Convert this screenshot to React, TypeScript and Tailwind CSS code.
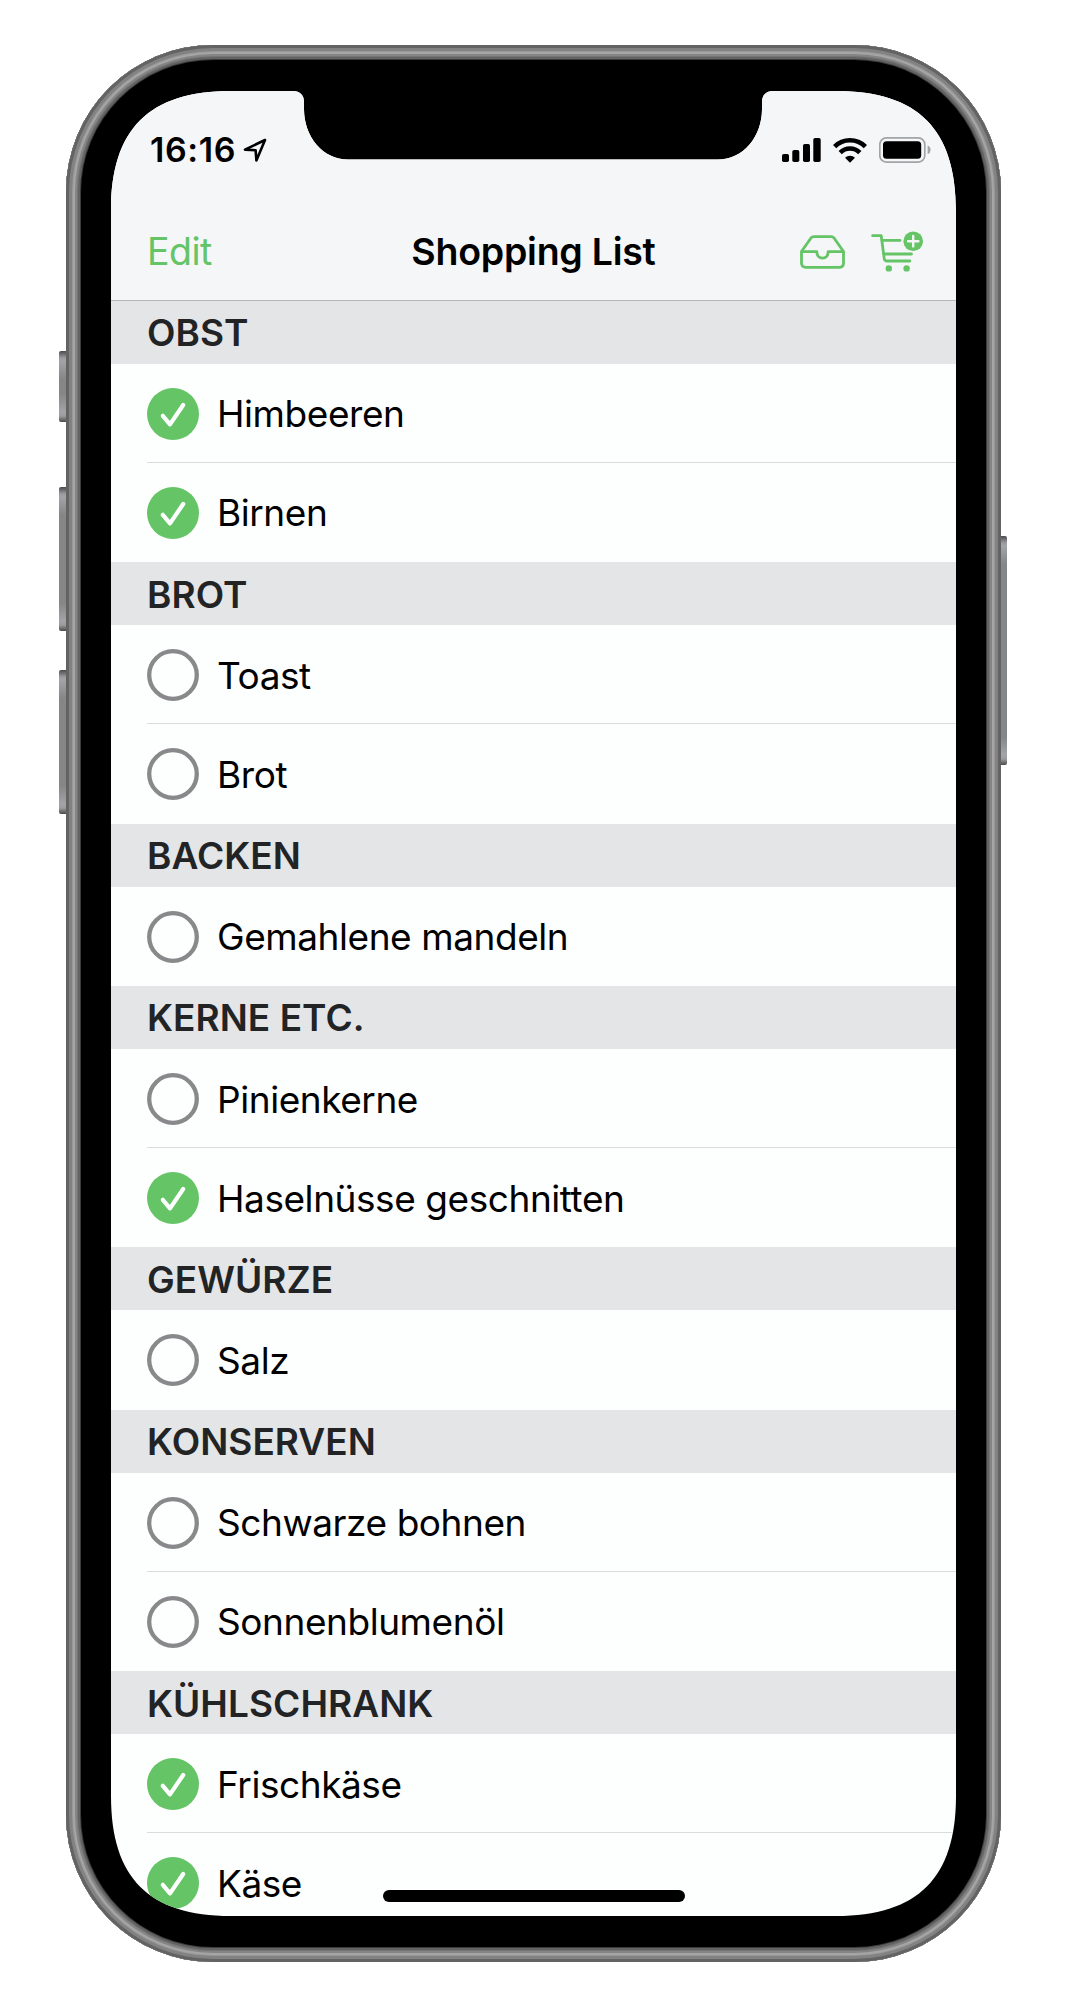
type Item = { name: string; done?: boolean };
type Section = { title: string; items: Item[] };

const sections: Section[] = [
  { title: "OBST", items: [{ name: "Himbeeren", done: true }, { name: "Birnen", done: true }] },
  { title: "BROT", items: [{ name: "Toast" }, { name: "Brot" }] },
  { title: "BACKEN", items: [{ name: "Gemahlene mandeln" }] },
  { title: "KERNE ETC.", items: [{ name: "Pinienkerne" }, { name: "Haselnüsse geschnitten", done: true }] },
  { title: "GEWÜRZE", items: [{ name: "Salz" }] },
  { title: "KONSERVEN", items: [{ name: "Schwarze bohnen" }, { name: "Sonnenblumenöl" }] },
  { title: "KÜHLSCHRANK", items: [{ name: "Frischkäse", done: true }, { name: "Käse", done: true }] },
];

function Check({ done }: { done?: boolean }) {
  return (
    <svg viewBox="0 0 52 52" className="size-[52px] shrink-0">
      {done ? (
        <>
          <circle cx="26" cy="26" r="26" fill="#64c466" />
          <path d="M15.8 27.8 L23 36.4 L36.2 17" fill="none" stroke="#fff" strokeWidth="4.2" strokeLinecap="round" strokeLinejoin="round" />
        </>
      ) : (
        <circle cx="26" cy="26" r="23.8" fill="none" stroke="#89898c" strokeWidth="4.3" />
      )}
    </svg>
  );
}

function StatusBar() {
  return (
    <div className="flex h-[118px] items-center pl-[39px] pr-[25px]">
      <span className="text-[34px] font-semibold leading-none tracking-[0.6px] text-black">16:16</span>
      <svg viewBox="0 0 24 24" className="ml-[7px] size-[24px]" fill="none" stroke="#000" strokeWidth="2.6" strokeLinejoin="round">
        <path d="M22 2 L2 11.6 L12.6 12.2 L13.4 22.4 Z" />
      </svg>
      <div className="ml-auto flex items-center">
        <svg viewBox="0 0 39 24" className="h-[24px] w-[39px]">
          <rect x="0" y="16" width="7" height="8" rx="1.8" />
          <rect x="10.3" y="12" width="7" height="12" rx="1.8" />
          <rect x="21" y="6" width="7" height="18" rx="1.8" />
          <rect x="31.3" y="0" width="7.4" height="24" rx="1.8" />
        </svg>
        <svg viewBox="0 0 34 25" className="ml-[12px] h-[25px] w-[34px]" fill="none" stroke="#000" strokeWidth="4.6">
          <path d="M1.6 8.6 A22 22 0 0 1 32.4 8.6" />
          <path d="M7.2 14.6 A13.8 13.8 0 0 1 26.8 14.6" />
          <path d="M12 19.8 A7.2 7.2 0 0 1 22 19.8 L17 24.8 Z" fill="#000" stroke="none" />
        </svg>
        <svg viewBox="0 0 52 26" className="ml-[12px] h-[26px] w-[52px]">
          <rect x="0.8" y="0.9" width="45" height="24.2" rx="6.5" fill="none" stroke="#a3a4a6" strokeWidth="1.7" />
          <rect x="4" y="4.2" width="38.2" height="17.6" rx="3.6" />
          <path d="M48.6 8.6 Q51.6 10 51.6 12.9 Q51.6 15.8 48.6 17.2 Z" fill="#a3a4a6" />
        </svg>
      </div>
    </div>
  );
}

function NavBar() {
  return (
    <div className="grid h-[86px] grid-cols-[1fr_auto_1fr] items-center pl-[36px] pr-[33px]">
      <span className="text-[37.5px] leading-none tracking-[-0.5px] text-[#64c466]">Edit</span>
      <h1 className="-ml-[3px] text-[37.5px] font-semibold leading-none tracking-[-0.25px] text-black">Shopping List</h1>
      <div className="-mt-[2px] flex items-center justify-end">
        <svg viewBox="0 0 45 34" className="mt-[1px] h-[34px] w-[45px]" fill="none" stroke="#64c466" strokeWidth="2.8" strokeLinejoin="round" strokeLinecap="round">
          <path d="M1.5 16.5 L10.8 3.2 Q12 1.6 14 1.6 H31 Q33 1.6 34.2 3.2 L43.5 16.5 V28 Q43.5 32.4 39 32.4 H6 Q1.5 32.4 1.5 28 Z" />
          <path d="M1.8 16.6 H16.8 C16.8 20.5 19 23.2 22.5 23.2 C26 23.2 28.2 20.5 28.2 16.6 H43.2" />
        </svg>
        <svg viewBox="0 0 52 41" className="ml-[26px] h-[41px] w-[52px]" fill="none" stroke="#64c466" strokeWidth="2.8" strokeLinejoin="round" strokeLinecap="round">
          <path d="M1.6 4.7 H10.2 L13.2 27.4 Q13.7 30 16 30 H38.8" />
          <path d="M11.2 9.4 H29" />
          <path d="M13 23 H40.5" />
          <circle cx="17.8" cy="37.4" r="3.2" fill="#64c466" stroke="none" />
          <circle cx="35.6" cy="37.4" r="3.2" fill="#64c466" stroke="none" />
          <circle cx="42.2" cy="10.2" r="9.8" fill="#64c466" stroke="none" />
          <path d="M42.2 5 V15.4 M37 10.2 H47.4" stroke="#f5f6f8" strokeWidth="2.4" />
        </svg>
      </div>
    </div>
  );
}

function ListSection({ title, items }: Section) {
  return (
    <section>
      <h2 className="flex h-[63.1px] items-center bg-[#e4e5e7] pl-[36px] pt-[1px] text-[37px] font-semibold leading-none tracking-[0.05px] text-[#222325]">
        {title}
      </h2>
      <ul>
        {items.map((item, i) => (
          <li key={item.name} className="flex h-[99.2px] pl-[36px]">
            <div
              className={
                i < items.length - 1
                  ? "flex flex-1 items-center gap-[18px] border-b border-[#d9dedd] pt-[2px]"
                  : "flex flex-1 items-center gap-[18px] pt-[1px]"
              }
            >
              <Check done={item.done} />
              <span className="whitespace-nowrap text-[37px] leading-none tracking-[-0.44px] text-black">{item.name}</span>
            </div>
          </li>
        ))}
      </ul>
    </section>
  );
}

function SideButton({ className }: { className: string }) {
  return (
    <div
      className={
        "absolute w-[8px] bg-[linear-gradient(to_bottom,#4b4b4d_0px,#9b9c9f_7px,#a3a4a7_10px,#858688_28px,#858688_calc(100%-28px),#a3a4a7_calc(100%-10px),#9b9c9f_calc(100%-6px),#4b4b4d_100%)] " +
        className
      }
    />
  );
}

export default function App() {
  return (
    <div className="h-[2008px] w-[1066px] overflow-hidden bg-white pl-[66px] pt-[45px] font-['Inter',sans-serif] antialiased">
      <div className="relative h-[1917px] w-[934.6px]">
        <SideButton className="-left-[7px] top-[306px] h-[71px] rounded-l-[2px]" />
        <SideButton className="-left-[7px] top-[442px] h-[144px] rounded-l-[2px]" />
        <SideButton className="-left-[7px] top-[625px] h-[144px] rounded-l-[2px]" />
        <SideButton className="-right-[6.4px] top-[491px] h-[229px] rounded-r-[2px]" />
        <div className="relative h-full rounded-[147px] bg-black pl-[45px] pt-[46px] shadow-[inset_0_0_0_3px_#636363,inset_0_0_0_6px_#828282,inset_0_0_0_7px_#989898,inset_0_0_0_9px_#a5a5a5,inset_0_0_0_11px_#858585,inset_0_0_0_12px_#757575,inset_0_0_0_14px_#636363,inset_0_0_0_15px_#3c3c3c]">
          <div className="relative h-[1825px] w-[845px] overflow-hidden bg-[#fdfefe] [clip-path:path('M0_120_C0_38_38_0_120_0_H182_C189_0_193_4_193_11_V18_C193_46_212_68.5_237_68.5_H607_C632_68.5_651_46_651_18_V11_C651_4_655_0_662_0_H725_C807_0_845_38_845_120_V1705_C845_1787_807_1825_725_1825_H120_C38_1825_0_1787_0_1705_Z')]">
            <header className="h-[209.6px] border-b border-[#b4b6b8] bg-[#f5f6f8]">
              <StatusBar />
              <NavBar />
            </header>
            <main>
              {sections.map((s) => (
                <ListSection key={s.title} {...s} />
              ))}
            </main>
            <div className="absolute bottom-[14.5px] left-[272px] h-[11.5px] w-[302px] rounded-full bg-black" />
          </div>
        </div>
      </div>
    </div>
  );
}
